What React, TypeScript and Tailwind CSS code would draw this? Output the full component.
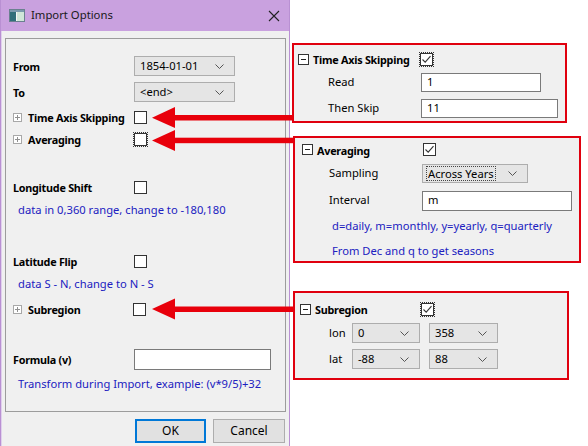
import React from "react";

const Plus = () => (
  <span className="w-[9px] h-[9px] border border-[#a8a8a8] bg-white flex items-center justify-center shrink-0">
    <svg width="7" height="7" viewBox="0 0 7 7">
      <path d="M1 3.5H6M3.5 1V6" stroke="#909090" strokeWidth="1" />
    </svg>
  </span>
);

const Minus = () => (
  <span className="w-[11px] h-[11px] border border-[#333] bg-white flex items-center justify-center shrink-0">
    <svg width="9" height="9" viewBox="0 0 9 9">
      <path d="M2 4.5H7" stroke="#222" strokeWidth="1" />
    </svg>
  </span>
);

const Check = ({ checked = false, focus = false }: { checked?: boolean; focus?: boolean }) => (
  <span
    className={
      "w-[15px] h-[15px] flex items-center justify-center shrink-0 " +
      (focus ? "border border-dotted border-[#333]" : "border border-transparent")
    }
  >
    <span className="w-[13px] h-[13px] border border-[#333] bg-white flex items-center justify-center">
      {checked && (
        <svg width="11" height="11" viewBox="0 0 11 11">
          <path d="M1.5 5.5L4.2 8.2L9.5 2.2" stroke="#333" strokeWidth="1.1" fill="none" />
        </svg>
      )}
    </span>
  </span>
);

const Chevron = () => (
  <svg width="9" height="5" viewBox="0 0 9 5" className="shrink-0">
    <path d="M0.5 0.5L4.5 4.5L8.5 0.5" stroke="#555" strokeWidth="1" fill="none" />
  </svg>
);

const Combo = ({ value, w, h = 20, focus = false }: { value: string; w: string; h?: number; focus?: boolean }) => (
  <div
    className={
      w +
      " border border-[#adadad] bg-[#e5e5e5] flex items-center justify-between pl-[3px] pr-[10px] font-normal text-[11.2px] whitespace-nowrap " +
      (h === 19 ? "h-[19px]" : "h-[20px]")
    }
  >
    <span className={focus ? "border border-dotted border-[#444] px-[1px] leading-[13px]" : "px-[2px]"}>{value}</span>
    <Chevron />
  </div>
);

const Input = ({ value, w, h = "h-[19px]" }: { value: string; w: string; h?: string }) => (
  <div className={w + " " + h + " border border-[#7a7a7a] bg-white flex items-center px-[5px] font-normal text-[11.2px]"}>{value}</div>
);

const B = ({ children, w, ml = "" }: { children: React.ReactNode; w: string; ml?: string }) => (
  <span className={w + " " + ml + " font-bold text-[10.8px] tracking-[-0.25px] leading-[15px] pt-[1px]"}>{children}</span>
);

export default function App() {
  return (
    <div
      className="relative w-[588px] h-[446px] bg-white flex overflow-hidden text-[11.2px] text-black whitespace-nowrap"
      style={{ fontFamily: '"Segoe UI", "Noto Sans", sans-serif' }}
    >
      {/* Dialog */}
      <div className="w-[290px] h-[446px] shrink-0 border-x border-[#b990d3] bg-[#c9a1df] flex flex-col">
        <div className="h-[31px] flex items-center pl-[8px] pr-[9px] shrink-0">
          <svg width="16" height="13" viewBox="0 0 16 13" className="shrink-0">
            <rect x="0.5" y="0.5" width="15" height="12" fill="#f4f7f8" stroke="#6a8090" />
            <rect x="1" y="3" width="6" height="9" fill="#2f6f7a" />
            <rect x="8" y="3" width="7" height="9" fill="#cfe6d8" />
            <rect x="1" y="1" width="14" height="2" fill="#7a9aae" />
          </svg>
          <span className="ml-[6px] text-[11.3px] text-[#1a1a1a]">Import Options</span>
          <div className="flex-1" />
          <svg width="12" height="12" viewBox="0 0 12 12">
            <path d="M1 1L11 11M11 1L1 11" stroke="#222" strokeWidth="1.1" />
          </svg>
        </div>
        <div className="flex-1 bg-[#f0f0f0] border-l border-[#e0d0ec] flex flex-col pl-[3px] pr-[3px]">
          {/* group box */}
          <div className="mt-[7px] h-[374px] border border-[#9c9c9c] pl-[7px] pt-[17px] flex flex-col">
            <div className="h-[20px] flex items-center">
              <B w="w-[121px]">From</B>
              <Combo value="1854-01-01" w="w-[101px]" />
            </div>
            <div className="h-[20px] mt-[6px] flex items-center">
              <B w="w-[121px]">To</B>
              <Combo value="<end>" w="w-[101px]" />
            </div>
            <div className="h-[20px] mt-[5px] flex items-center">
              <Plus />
              <B w="w-[105px]" ml="ml-[6px]">Time Axis Skipping</B>
              <Check />
            </div>
            <div className="h-[20px] mt-[2px] flex items-center">
              <Plus />
              <B w="w-[105px]" ml="ml-[6px]">Averaging</B>
              <Check focus />
            </div>
            <div className="h-[20px] mt-[28px] flex items-center">
              <B w="w-[120px]">Longitude Shift</B>
              <Check />
            </div>
            <div className="h-[20px] mt-[3px] flex items-center pl-[5px] text-[#2020c0]">
              data in 0,360 range, change to -180,180
            </div>
            <div className="h-[20px] mt-[31px] flex items-center">
              <B w="w-[120px]">Latitude Flip</B>
              <Check />
            </div>
            <div className="h-[20px] mt-[3px] flex items-center pl-[5px] text-[#2020c0]">
              data S - N, change to N - S
            </div>
            <div className="h-[20px] mt-[5px] flex items-center">
              <Plus />
              <B w="w-[104px]" ml="ml-[6px]">Subregion</B>
              <Check />
            </div>
            <div className="h-[20px] mt-[30px] flex items-center">
              <B w="w-[121px]">Formula (v)</B>
              <Input value="" w="w-[137px]" h="h-[21px]" />
            </div>
            <div className="h-[20px] mt-[5px] flex items-center pl-[5px] text-[#2020c0]">
              Transform during Import, example: (v*9/5)+32
            </div>
          </div>
          <div className="mt-[7px] flex justify-end gap-[7px] pr-[1px]">
            <div className="w-[71px] h-[24px] border-2 border-[#0078d7] bg-[#e1e1e1] flex items-center justify-center text-[12px]">
              OK
            </div>
            <div className="w-[72px] h-[24px] border border-[#adadad] bg-[#e1e1e1] flex items-center justify-center text-[12px]">
              Cancel
            </div>
          </div>
        </div>
      </div>

      {/* Right callouts */}
      <div className="flex flex-col">
        <div className="ml-[2px] mt-[43px] w-[275px] h-[80px] border-2 border-[#e0000e] bg-[#f0f0f0] flex flex-col pl-[4px] pt-[5px]">
          <div className="h-[18px] flex items-center">
            <Minus />
            <B w="w-[106px]" ml="ml-[4px]">Time Axis Skipping</B>
            <Check checked focus />
          </div>
          <div className="h-[18px] mt-[5px] flex items-center">
            <span className="pl-[30px] w-[123px]">Read</span>
            <Input value="1" w="w-[120px]" />
          </div>
          <div className="h-[18px] mt-[8px] flex items-center">
            <span className="pl-[30px] w-[123px]">Then Skip</span>
            <Input value="11" w="w-[137px]" />
          </div>
        </div>

        <div className="ml-[3px] mt-[13px] w-[288px] h-[127px] border-2 border-[#e0000e] bg-[#f0f0f0] flex flex-col pl-[7px] pt-[3px]">
          <div className="h-[18px] flex items-center">
            <Minus />
            <B w="w-[105px]" ml="ml-[4px]">Averaging</B>
            <Check checked />
          </div>
          <div className="h-[20px] mt-[5px] flex items-center">
            <span className="pl-[27px] w-[120px]">Sampling</span>
            <Combo value="Across Years" w="w-[106px]" h={19} focus />
          </div>
          <div className="h-[20px] mt-[7px] flex items-center">
            <span className="pl-[27px] w-[120px]">Interval</span>
            <Input value="m" w="w-[150px]" h="h-[20px]" />
          </div>
          <div className="h-[20px] mt-[6px] flex items-center pl-[30px] text-[#2020c0]">
            d=daily, m=monthly, y=yearly, q=quarterly
          </div>
          <div className="h-[20px] mt-[5px] flex items-center pl-[30px] text-[#2020c0]">
            From Dec and q to get seasons
          </div>
        </div>

        <div className="ml-[3px] mt-[28px] w-[276px] h-[89px] border-2 border-[#e0000e] bg-[#f0f0f0] flex flex-col pl-[5px] pt-[7px]">
          <div className="h-[18px] flex items-center">
            <Minus />
            <B w="w-[105px]" ml="ml-[4px]">Subregion</B>
            <Check checked focus />
          </div>
          <div className="h-[20px] mt-[5px] flex items-center">
            <span className="pl-[29px] w-[52px]">lon</span>
            <Combo value="0" w="w-[68px]" />
            <div className="w-[9px]" />
            <Combo value="358" w="w-[69px]" />
          </div>
          <div className="h-[20px] mt-[6px] flex items-center">
            <span className="pl-[29px] w-[52px]">lat</span>
            <Combo value="-88" w="w-[68px]" />
            <div className="w-[9px]" />
            <Combo value="88" w="w-[69px]" />
          </div>
        </div>
      </div>

      {/* Arrows overlay */}
      <svg className="absolute left-0 top-0 pointer-events-none" width="588" height="446" viewBox="0 0 588 446">
        <g fill="#e8000b">
          <rect x="170" y="115" width="123" height="5.5" />
          <polygon points="152,117.7 175,107 175,128" />
          <rect x="170" y="137.7" width="124" height="5.5" />
          <polygon points="152,140.5 175,130 175,151" />
          <rect x="170" y="306.5" width="124" height="5.5" />
          <polygon points="152,309 175,298.5 175,319.5" />
        </g>
      </svg>
    </div>
  );
}
